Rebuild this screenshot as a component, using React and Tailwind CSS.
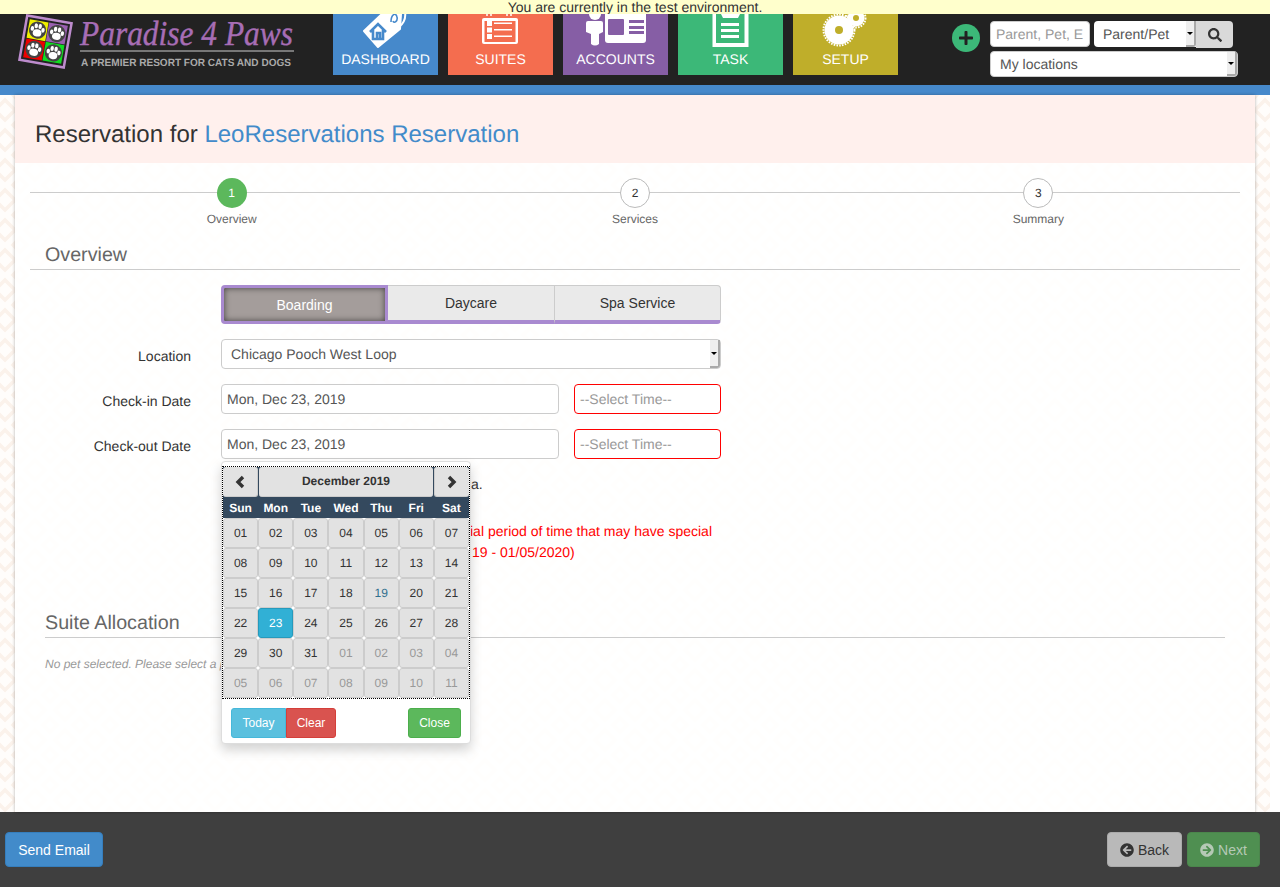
import { FaArrowCircleLeft, FaArrowCircleRight, FaPlus, FaSearch } from "react-icons/fa";

// ─── Header drawings (coordinates are the tile's own, y starts under the notice bar) ─────

function TagIcon() {
  return (
    <svg width="105" height="36" viewBox="0 14 105 36" className="block">
      <path d="M31 31 L52 11 L68 14 L67 29 L45 47 Z" fill="#fff" stroke="#fff" strokeWidth="2" strokeLinejoin="round" />
      <path d="M37 32 L45 24 L53 32 M40 30 V39 H50 V30 M44 39 V33 H47 V39" fill="none" stroke="#4689cb" strokeWidth="2.6" />
      <path d="M58 22 C58 14 63 12 64 17 C65 21 61 24 60 21" fill="none" stroke="#4689cb" strokeWidth="1.6" />
      <path d="M66 27 C71 23 73 18 72 12" fill="none" stroke="#fff" strokeWidth="2" />
    </svg>
  );
}

function ChecklistIcon() {
  return (
    <svg width="105" height="36" viewBox="0 14 105 36" className="block">
      <rect x="34" y="18" width="36" height="26" rx="2" fill="#fff" />
      <rect x="36.5" y="21" width="31" height="21" fill="#f46d4f" />
      <path d="M39 14 V16 M43 14 V16 M59 14 V16 M63 14 V16" stroke="#fff" strokeWidth="1.5" />
      <rect x="39" y="21" width="5" height="5" fill="#fff" />
      <rect x="39" y="27.5" width="5" height="5" fill="#fff" />
      <rect x="39" y="34" width="5" height="5" fill="#fff" />
      <rect x="46" y="22.5" width="18" height="1.5" fill="#fff" />
      <rect x="46" y="29" width="18" height="1.5" fill="#fff" />
      <rect x="46" y="35.5" width="18" height="1.5" fill="#fff" />
    </svg>
  );
}

function AccountIcon() {
  return (
    <svg width="105" height="36" viewBox="0 14 105 36" className="block">
      <circle cx="32" cy="14" r="6" fill="#fff" />
      <path d="M23 23 Q23 21 25 21 H38 Q40 21 40 23 V32 L36 34 V44 Q32 47 28 44 V34 L23 32 Z" fill="#fff" />
      <path d="M42 10 H83 V40 Q83 43 80 43 H45 Q42 43 42 40 Z" fill="#fff" />
      <rect x="45" y="19" width="16" height="16" rx="1" fill="#865ea5" />
      <rect x="66" y="20" width="15" height="3" fill="#865ea5" />
      <rect x="66" y="26" width="15" height="3" fill="#865ea5" />
      <rect x="66" y="31" width="15" height="3" fill="#865ea5" />
    </svg>
  );
}

function ClipboardIcon() {
  return (
    <svg width="105" height="36" viewBox="0 14 105 36" className="block">
      <rect x="36.5" y="10" width="32" height="35" fill="none" stroke="#fff" strokeWidth="4" />
      <rect x="38" y="10" width="28" height="33" fill="#3cb878" />
      <path d="M43 14 H62 L60 18 H45 Z" fill="#fff" />
      <rect x="40" y="18" width="1.5" height="25" fill="#3cb878" />
      <rect x="43" y="23" width="18" height="3" fill="#fff" />
      <rect x="43" y="29" width="18" height="3" fill="#fff" />
      <rect x="43" y="35" width="18" height="3" fill="#fff" />
    </svg>
  );
}

function GearsIcon() {
  return (
    <svg width="105" height="36" viewBox="0 14 105 36" className="block">
      <circle cx="46" cy="30" r="14.5" fill="#fff" />
      <circle cx="46" cy="30" r="15.5" fill="none" stroke="#fff" strokeWidth="2" strokeDasharray="1.6 1.2" />
      <circle cx="46" cy="30" r="4" fill="#bfae2a" />
      <circle cx="63" cy="18" r="8.5" fill="#fff" />
      <circle cx="63" cy="18" r="9.5" fill="none" stroke="#fff" strokeWidth="2" strokeDasharray="1.6 1.2" />
      <circle cx="63" cy="18" r="3" fill="#bfae2a" />
    </svg>
  );
}

function Paw({ x, y, fill }) {
  return (
    <g transform={`translate(${x} ${y})`}>
      <rect x="-9.5" y="-9.5" width="19" height="19" fill={fill} />
      <circle r="8.6" fill="#444" />
      <ellipse cx="0" cy="2.8" rx="4.4" ry="3.6" fill="#fff" />
      <ellipse cx="-5.4" cy="-0.8" rx="1.7" ry="2.4" fill="#fff" />
      <ellipse cx="-2" cy="-4" rx="1.7" ry="2.5" fill="#fff" />
      <ellipse cx="2" cy="-4" rx="1.7" ry="2.5" fill="#fff" />
      <ellipse cx="5.4" cy="-0.8" rx="1.7" ry="2.4" fill="#fff" />
    </g>
  );
}

function Logo() {
  return (
    <svg width="333" height="71" viewBox="0 14 333 71" className="block shrink-0">
      <g transform="translate(45.5 41.5) rotate(10)">
        <rect x="-22.5" y="-22.5" width="45" height="45" fill="#222" stroke="#bd8ccd" strokeWidth="2.5" />
        <Paw x={-9.8} y={-9.8} fill="#eeee00" />
        <Paw x={9.8} y={-9.8} fill="#9a5fb0" />
        <Paw x={-9.8} y={9.8} fill="#ee0000" />
        <Paw x={9.8} y={9.8} fill="#11dd22" />
      </g>
      <text x="80" y="45" fontFamily="'Liberation Serif', serif" fontStyle="italic" fontSize="35" fill="#a76db5" stroke="#a76db5" strokeWidth="0.4" textLength="213" lengthAdjust="spacingAndGlyphs">
        Paradise 4 Paws
      </text>
      <rect x="80" y="50" width="214" height="2" fill="#777" />
      <text x="81" y="66" fontFamily="'Liberation Sans', sans-serif" fontWeight="700" fontSize="10.5" fill="#aaa" textLength="210" lengthAdjust="spacingAndGlyphs">
        A PREMIER RESORT FOR CATS AND DOGS
      </text>
    </svg>
  );
}

const tiles = [
  { label: "DASHBOARD", color: "bg-[#4689cb]", Icon: TagIcon },
  { label: "SUITES", color: "bg-[#f46d4f]", Icon: ChecklistIcon },
  { label: "ACCOUNTS", color: "bg-[#865ea5]", Icon: AccountIcon },
  { label: "TASK", color: "bg-[#3cb878]", Icon: ClipboardIcon },
  { label: "SETUP", color: "bg-[#bfae2a]", Icon: GearsIcon },
];

// small native-looking select arrow
function SelectArrow() {
  return (
    <span className="w-[10px] shrink-0 self-stretch flex items-center justify-center bg-[#efefef] border-r-2 border-b-2 border-[#a9a9a9] rounded-br-[3px]">
      <span className="w-0 h-0 border-x-[3px] border-t-[3px] border-x-transparent border-t-black" />
    </span>
  );
}

function Header() {
  return (
    <header className="w-[1270px] h-[71px] bg-[#222222] flex overflow-hidden">
      <Logo />
      <nav className="flex gap-[10px] w-[565px] shrink-0">
        {tiles.map(({ label, color, Icon }) => (
          <a key={label} className={`w-[105px] h-[61px] ${color} text-white text-sm block text-center`}>
            <Icon />
            <span className="block leading-[18px]">{label}</span>
          </a>
        ))}
      </nav>
      <span className="ml-[54px] mt-[10px] w-[28px] h-[28px] rounded-full bg-[#3cb878] flex items-center justify-center text-[#222222] text-[16px]">
        <FaPlus />
      </span>
      <div className="ml-[10px] w-[248px] text-sm">
        <div className="flex mt-[7px] h-[26px]">
          <div className="w-[100px] bg-white rounded-[4px] border border-[#ccc] pl-[5px] text-[#999] leading-[24px] overflow-hidden whitespace-nowrap">Parent, Pet, E</div>
          <div className="ml-[4px] w-[102px] bg-white rounded-l-[4px] flex text-[#555] leading-[26px]">
            <span className="flex-1 pl-[9px]">Parent/Pet</span>
            <SelectArrow />
          </div>
          <button className="w-[37px] h-[27px] bg-[#d9d9d9] rounded-r-[4px] flex items-center justify-center text-[#333]">
            <FaSearch />
          </button>
        </div>
        <div className="flex mt-[4px] h-[26px] bg-white rounded-[4px] border border-[#ccc] text-[#555] leading-[24px]">
          <span className="flex-1 pl-[9px]">My locations</span>
          <SelectArrow />
        </div>
      </div>
    </header>
  );
}

// ─── Calendar popup ───────────────────────────────────────────────────────────

const weekdays = ["Sun", "Mon", "Tue", "Wed", "Thu", "Fri", "Sat"];

const calendarDays = [
  "01", "02", "03", "04", "05", "06", "07",
  "08", "09", "10", "11", "12", "13", "14",
  "15", "16", "17", "18", "19", "20", "21",
  "22", "23", "24", "25", "26", "27", "28",
  "29", "30", "31", "01", "02", "03", "04",
  "05", "06", "07", "08", "09", "10", "11",
];

function dayClass(i) {
  if (i === 22) return "bg-[#31b0d5] border-[#269abc] text-white";
  if (i === 18) return "bg-[#e2e2e2] border-[#ccc] text-[#31708f]";
  if (i > 30) return "bg-[#e2e2e2] border-[#ccc] text-[#999]";
  return "bg-[#e2e2e2] border-[#ccc] text-[#333]";
}

function Chevron({ d }) {
  return (
    <svg width="12" height="14" viewBox="0 0 12 14">
      <path d={d} fill="none" stroke="#333" strokeWidth="3.4" />
    </svg>
  );
}

function Calendar() {
  return (
    <div className="absolute top-[32px] left-0 z-10 w-[250px] h-[283px] bg-white border border-[#ddd] rounded-[4px] shadow-[0_6px_12px_rgba(0,0,0,0.175)] pt-[4px] text-xs">
      <div className="border border-dotted border-black">
        <div className="grid grid-cols-7 bg-[#34495e] h-[30px]">
          <button className="bg-[#e2e2e2] rounded-[3px] border-r border-b border-[#ccc] flex items-center justify-center"><Chevron d="M9 2 L4 7 L9 12" /></button>
          <div className="col-span-5 mx-[1px] bg-[#e2e2e2] rounded-[3px] border-b border-[#ccc] font-bold text-[#333] leading-[29px] text-center">December 2019</div>
          <button className="bg-[#e2e2e2] rounded-[3px] border-l border-b border-[#ccc] flex items-center justify-center"><Chevron d="M3 2 L8 7 L3 12" /></button>
        </div>
        <div className="grid grid-cols-7 bg-[#34495e] h-[21px] text-white font-bold leading-[22px] text-center">
          {weekdays.map((d) => <div key={d}>{d}</div>)}
        </div>
        <div className="grid grid-cols-7 auto-rows-[30px] bg-white">
          {calendarDays.map((d, i) => (
            <div key={i} className={`border rounded-[3px] leading-[28px] text-center ${dayClass(i)}`}>{d}</div>
          ))}
        </div>
      </div>
      <div className="flex mt-[9px] px-[9px] text-white">
        <button className="w-[55px] h-[30px] bg-[#5bc0de] border border-[#46b8da] rounded-l-[3px]">Today</button>
        <button className="w-[50px] h-[30px] bg-[#d9534f] border border-[#d43f3a] rounded-r-[3px]">Clear</button>
        <button className="ml-auto w-[53px] h-[30px] bg-[#5cb85c] border border-[#4cae4c] rounded-[3px]">Close</button>
      </div>
    </div>
  );
}

// ─── Form bits ────────────────────────────────────────────────────────────────

function StepDot({ n, label, active }) {
  return (
    <div className="flex flex-col items-center relative">
      <span className={`w-[30px] h-[30px] rounded-full flex items-center justify-center text-xs ${active ? "bg-[#5cb85c] text-white" : "bg-white border border-[#bbb] text-[#333]"}`}>{n}</span>
      <span className="mt-[3px] text-xs leading-[17px] text-[#666]">{label}</span>
    </div>
  );
}

function DateRow({ label, calendar }) {
  return (
    <div className="flex mt-[15px] h-[30px]">
      <label className="w-[161px] text-right text-sm text-[#333] leading-[34px]">{label}</label>
      <div className="relative ml-[30px] w-[338px]">
        <div className="h-[30px] bg-white border border-[#ccc] rounded-[4px] pl-[5px] text-sm leading-[28px] text-[#555]">Mon, Dec 23, 2019</div>
        {calendar && <Calendar />}
      </div>
      <div className="ml-[15px] w-[147px] h-[30px] bg-white border border-[#ff0000] rounded-[4px] pl-[5px] text-sm leading-[28px] text-[#999]">--Select Time--</div>
    </div>
  );
}

export default function App() {
  return (
    <div className="w-[1280px] h-[887px] overflow-hidden bg-white font-['Liberation_Sans',Arial,sans-serif] [text-rendering:geometricPrecision] flex flex-col">
      <div className="w-[1270px] h-[14px] bg-[#ffffcc] text-sm leading-[14px] text-[#333] text-center shrink-0">You are currently in the test environment.</div>
      <Header />
      <div className="w-[1270px] h-[10px] bg-[#4689cb] shrink-0" />

      <main className="relative w-[1270px] h-[717px] px-[15px] shrink-0">
        {/* faint zigzag wallpaper behind the card */}
        <svg className="absolute inset-0" width="1270" height="717">
          <defs>
            <pattern id="zigzag" width="30" height="30" patternUnits="userSpaceOnUse" x="-10">
              <path d="M15 5 L25 15 L15 25 L5 15 Z M15 -8 L38 15 L15 38 L-8 15 Z" fill="none" stroke="#fbf2eb" strokeWidth="3.5" />
            </pattern>
          </defs>
          <rect width="1270" height="717" fill="#fffdfb" />
          <rect width="1270" height="717" fill="url(#zigzag)" />
        </svg>

        <section className="relative h-full bg-white/90 shadow-[0_0_3px_rgba(0,0,0,0.3)]">
          <div className="h-[68px] bg-[#fff0ed] pl-[20px] text-2xl leading-[80px] text-[#333] overflow-hidden">
            Reservation for <a className="text-[#428bca]">LeoReservations Reservation</a>
          </div>

          <div className="px-[15px]">
            {/* stepper */}
            <div className="relative mt-[15px]">
              <div className="absolute left-0 right-0 top-[14px] h-px bg-[#ccc]" />
              <div className="grid grid-cols-3">
                <StepDot n="1" label="Overview" active />
                <StepDot n="2" label="Services" />
                <StepDot n="3" label="Summary" />
              </div>
            </div>

            <h2 className="mt-[15px] pl-[15px] pt-[1px] border-b border-[#ccc] text-[19.7px] leading-[22px] text-[#666] h-[27px]">Overview</h2>

            {/* service tabs */}
            <div className="flex ml-[191px] mt-[15px] w-[500px] h-[39px] text-sm">
              <button className="w-[167px] bg-[#a49d9b] border-[3px] border-[#a98ad0] rounded-l-[4px] text-white shadow-[inset_0_0_6px_rgba(0,0,0,0.6)]">Boarding</button>
              <button className="w-[167px] bg-[#eaeaea] border-t border-r border-[#ccc] border-b-[4px] border-b-[#a98ad0] text-[#333]">Daycare</button>
              <button className="w-[166px] bg-[#eaeaea] border-t border-r border-[#ccc] border-b-[4px] border-b-[#a98ad0] rounded-r-[4px] text-[#333]">Spa Service</button>
            </div>

            <div className="flex mt-[15px] h-[30px]">
              <label className="w-[161px] text-right text-sm text-[#333] leading-[34px]">Location</label>
              <div className="ml-[30px] w-[500px] flex bg-white border border-[#ccc] rounded-[4px] text-sm leading-[28px] text-[#555]">
                <span className="flex-1 pl-[9px]">Chicago Pooch West Loop</span>
                <SelectArrow />
              </div>
            </div>

            <DateRow label="Check-in Date" />
            <DateRow label="Check-out Date" calendar />

            <p className="mt-[15px] ml-[441px] text-sm leading-[20px] text-[#333]">a.</p>
            <div className="mt-[27px] ml-[440px] text-sm leading-[21px] text-[#ff0000] whitespace-nowrap">
              <p>ial period of time that may have special</p>
              <p className="ml-[2px]">19 - 01/05/2020)</p>
            </div>

            <h2 className="mt-[48px] mx-[15px] pt-[1px] border-b border-[#ccc] text-[19.7px] leading-[22px] text-[#666] h-[27px]">Suite Allocation</h2>
            <p className="mt-[18px] ml-[15px] text-xs leading-[17px] italic text-[#999]">No pet selected. Please select a pet</p>
          </div>
        </section>
      </main>

      <footer className="h-[75px] bg-[#3f3f3f] flex items-start pt-[20px] pl-[5px] pr-[20px] text-sm shrink-0">
        <button className="w-[98px] h-[35px] bg-[#428bca] border border-[#357ebd] rounded-[4px] text-white">Send Email</button>
        <button className="ml-auto w-[75px] h-[35px] bg-[#b9b9b9] border border-[#aaa] rounded-[4px] text-[#333] flex items-center justify-center gap-[4px]"><FaArrowCircleLeft />Back</button>
        <button className="ml-[5px] w-[73px] h-[35px] bg-[#4f8f51] border border-[#4b864c] rounded-[4px] text-[#b5c9b5] flex items-center justify-center gap-[4px]"><FaArrowCircleRight />Next</button>
      </footer>
    </div>
  );
}
